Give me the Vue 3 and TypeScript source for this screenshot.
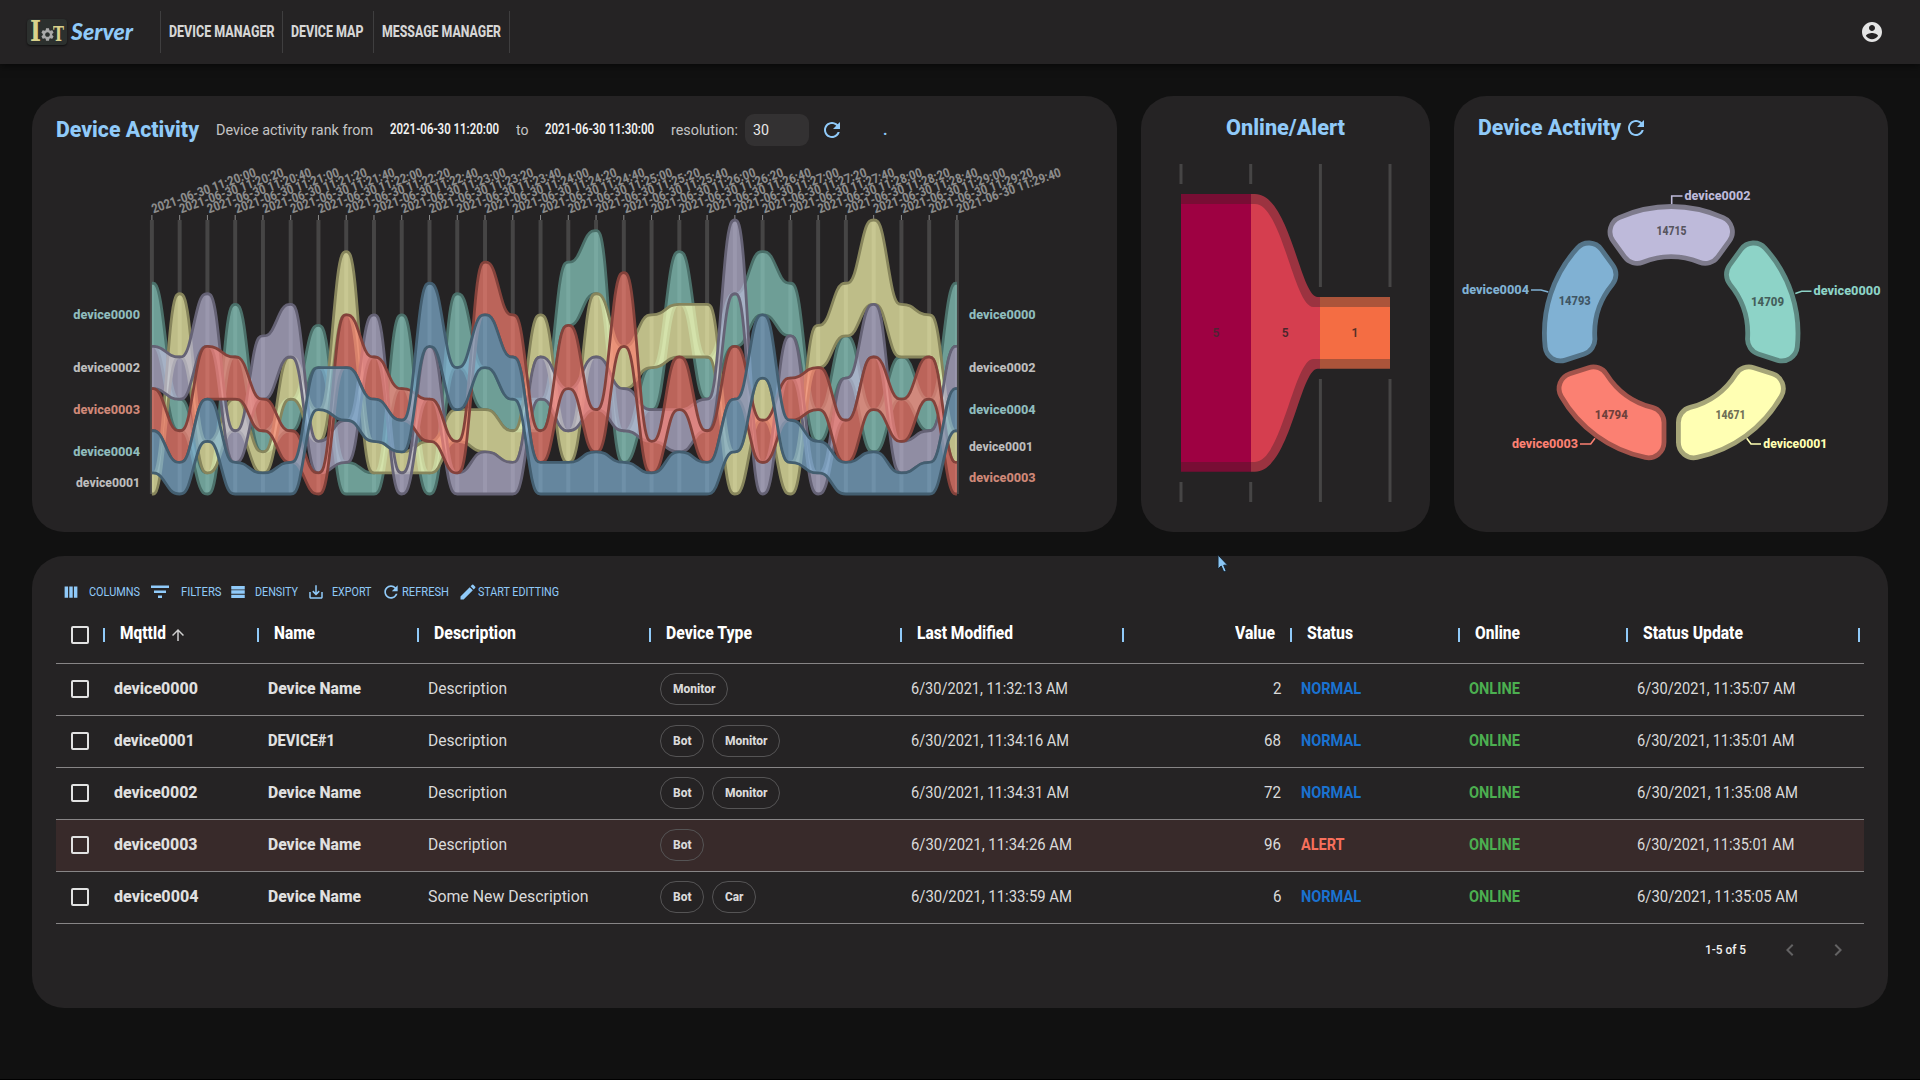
<script setup lang="ts">
type Key = 'T' | 'Y' | 'P' | 'R' | 'B'

interface Layer { key: Key; fill: string; stroke: string }
interface Device {
  id: string; idW: number; name: string; nameW: number; desc: string; descW: number
  types: string[]; modified: string; modW: number; value: number; alert: boolean
  updated: string; updW: number
}

/* Squeezes or stretches a label horizontally so that it takes the given width. */
const vFit = {
  mounted(el: HTMLElement, binding: { value: number }) {
    const natural = el.getBoundingClientRect().width
    if (!natural) return
    el.style.transform = `scaleX(${binding.value / natural})`
    el.style.marginRight = `${binding.value - natural + (parseFloat(getComputedStyle(el).marginRight) || 0)}px`
  },
}

const nav = [
  { label: 'DEVICE MANAGER', w: 105.5, box: 121.5 },
  { label: 'DEVICE MAP', w: 72.5, box: 91 },
  { label: 'MESSAGE MANAGER', w: 119, box: 136 },
]

/* ---------- activity ranking ---------- */
const layers: Layer[] = [
  { key: 'T', fill: '#8dd3c7', stroke: '#4b706a' },
  { key: 'Y', fill: '#ffffb3', stroke: '#87855c' },
  { key: 'P', fill: '#bebada', stroke: '#656275' },
  { key: 'R', fill: '#fb8072', stroke: '#84423b' },
  { key: 'B', fill: '#80b1d3', stroke: '#435e70' },
]

/* every column lists its devices from the top rank down, with their weights */
const columns = [
  'T6P4R4B4Y2', 'Y6P4T3R3B3', 'P5R5B4Y3T2', 'T5R4Y3P3B3', 'P6R3T2Y2B2', 'P5Y4T3R3B3',
  'T4B4Y3P3R2', 'Y6R5B5P4T3', 'P4R4B4Y3T2', 'T7R3B3Y2P2', 'B6P5R4Y3T2', 'T7B4Y3R3P2',
  'R5B5T4Y4P4', 'R4B4T3Y3P3', 'Y4P4T3R3B3', 'T6R6P4Y3B3', 'T6Y6P5R4B4', 'R7Y4P4T3B3',
  'Y5T4P3R3B2', 'T5Y5R5P4B4', 'Y5T4P3R3B3', 'P7T5R5B5Y4', 'T6B6Y4R4P3', 'T5P4R4B4Y3',
  'Y4R4T3B3P2', 'Y5T4P4R4B3', 'Y8P5R5T4B4', 'Y5T4R4P3B2', 'Y4R4T3P3B3', 'T6P4B4Y3R3',
]
const X0 = 151.9
const STEP = 27.76
const BASE = 494
const UNIT = 274 / 26
const colX = (i: number) => X0 + i * STEP

function bounds(col: string, key: Key): [number, number] {
  const parts = (col.match(/[A-Z]\d/g) ?? []).map(p => ({ k: p[0], n: Number(p[1]) }))
  let u = parts.reduce((s, p) => s + p.n, 0)
  for (const p of parts) {
    if (p.k === key) return [BASE - u * UNIT, BASE - (u - p.n) * UNIT]
    u -= p.n
  }
  return [BASE, BASE]
}

/* open cubic B-spline that starts and ends on its first and last points */
function basis(pts: [number, number][], first: string): string {
  const f = (n: number) => n.toFixed(2)
  let d = ''
  let [x0, y0] = pts[0]
  let [x1, y1] = pts[1]
  d += `${first}${f(x0)},${f(y0)}L${f((5 * x0 + x1) / 6)},${f((5 * y0 + y1) / 6)}`
  const push = (x: number, y: number) => {
    d += `C${f((2 * x0 + x1) / 3)},${f((2 * y0 + y1) / 3)} ${f((x0 + 2 * x1) / 3)},${f((y0 + 2 * y1) / 3)} ${f((x0 + 4 * x1 + x) / 6)},${f((y0 + 4 * y1 + y) / 6)}`
    x0 = x1; y0 = y1; x1 = x; y1 = y
  }
  for (const p of pts.slice(2)) push(p[0], p[1])
  push(x1, y1)
  d += `L${f(x1)},${f(y1)}`
  return d
}

function edge(key: Key, side: 0 | 1): [number, number][] {
  const pad = STEP * 0.3
  const out: [number, number][] = []
  columns.forEach((c, i) => {
    const y = bounds(c, key)[side]
    if (i > 0) out.push([colX(i) - pad, y])
    out.push([colX(i), y])
    if (i < columns.length - 1) out.push([colX(i) + pad, y])
  })
  return out
}

const areas = layers.map(l => {
  const top = edge(l.key, 0)
  const bottom = edge(l.key, 1)
  return {
    ...l,
    area: basis(top, 'M') + basis([...bottom].reverse(), 'L') + 'Z',
    top: basis(top, 'M'),
    bottom: basis(bottom, 'M'),
  }
})

const stamps = columns.map((_, i) => {
  const s = i * 20
  const two = (n: number) => String(n).padStart(2, '0')
  return `2021-06-30 11:${two(20 + Math.floor(s / 60))}:${two(s % 60)}`
})

const leftLabels = [
  { t: 'device0000', y: 314.3, c: '#8fbcbd' }, { t: 'device0002', y: 367.3, c: '#bdbdbd' },
  { t: 'device0003', y: 409.3, c: '#cf8878' }, { t: 'device0004', y: 451.3, c: '#8fbcbd' },
  { t: 'device0001', y: 482.3, c: '#bdbdbd' },
]
const rightLabels = [
  { t: 'device0000', y: 314.3, c: '#8fbcbd' }, { t: 'device0002', y: 367.3, c: '#bdbdbd' },
  { t: 'device0004', y: 409.3, c: '#8fbcbd' }, { t: 'device0001', y: 446.3, c: '#bdbdbd' },
  { t: 'device0003', y: 477.3, c: '#cf8878' },
]
const labelW = (t: string) => (t.endsWith('1') ? 64 : 66.7)

/* ---------- ring ---------- */
const CX = 1671.2
const CY = 333.3
function slicePath(mid: number): string {
  const R = 126.8, r = 76.5, rc = 15.5, gap = 7.2
  const rad = (deg: number) => (deg * Math.PI) / 180
  /* point from a boundary ray: `along` it and `off` to its side; dir turns toward the slice */
  const at = (deg: number, along: number, off: number, dir: number) => {
    const a = rad(deg)
    return [CX + Math.sin(a) * along + dir * Math.cos(a) * off, CY - Math.cos(a) * along + dir * Math.sin(a) * off]
  }
  const corner = (deg: number, dir: number, outer: boolean) => {
    const dist = outer ? R - rc : r + rc
    const off = gap + rc
    const along = Math.sqrt(dist * dist - off * off)
    const k = (outer ? R : r) / dist
    return { side: at(deg, along, gap, dir), arc: at(deg, along * k, off * k, dir) }
  }
  const a = mid - 36
  const b = mid + 36
  const oa = corner(a, 1, true), ob = corner(b, -1, true)
  const ia = corner(a, 1, false), ib = corner(b, -1, false)
  const p = (v: number[]) => `${v[0].toFixed(2)},${v[1].toFixed(2)}`
  return `M${p(oa.side)}A${rc},${rc} 0 0 1 ${p(oa.arc)}A${R},${R} 0 0 1 ${p(ob.arc)}A${rc},${rc} 0 0 1 ${p(ob.side)}` +
    `L${p(ib.side)}A${rc},${rc} 0 0 1 ${p(ib.arc)}A${r},${r} 0 0 0 ${p(ia.arc)}A${rc},${rc} 0 0 1 ${p(ia.side)}Z`
}
const slices = [
  { id: 'device0002', v: '14715', mid: 0, fill: '#bebada', stroke: '#7e7b8c', num: '#57555e', w: 66, vw: 30, vx: 1671.5, vy: 235, link: '1671.7,204 1671.7,196 1682.5,196', lx: 1684.5, ly: 200, anchor: 'start' },
  { id: 'device0000', v: '14709', mid: 72, fill: '#8dd3c7', stroke: '#5e8a83', num: '#445e5a', w: 67, vw: 33, vx: 1767.5, vy: 306, link: '1795.3,293.4 1801.7,291.3 1811.5,291.3', lx: 1813.5, ly: 295, anchor: 'start' },
  { id: 'device0001', v: '14671', mid: 144, fill: '#ffffb3', stroke: '#a6a578', num: '#6f6f55', w: 64, vw: 30, vx: 1730.5, vy: 419, link: '1746.7,438.3 1751,444 1761,444', lx: 1763.3, ly: 448, anchor: 'start' },
  { id: 'device0003', v: '14794', mid: 216, fill: '#fb8072', stroke: '#a3534b', num: '#6f403b', w: 66, vw: 33, vx: 1611.3, vy: 419, link: '1595,438.3 1590.7,444 1580,444', lx: 1578, ly: 448, anchor: 'end' },
  { id: 'device0004', v: '14793', mid: 288, fill: '#80b1d3', stroke: '#547489', num: '#3f5563', w: 67, vw: 32, vx: 1574.7, vy: 305, link: '1548.3,292 1541,290 1531,290', lx: 1529, ly: 294, anchor: 'end' },
]

/* ---------- table ---------- */
const heads = [
  { t: 'MqttId', w: 46 }, { t: 'Name', w: 41 }, { t: 'Description', w: 82 },
  { t: 'Device Type', w: 86 }, { t: 'Last Modified', w: 96 }, { t: 'Value', w: 40 },
  { t: 'Status', w: 46 }, { t: 'Online', w: 45 }, { t: 'Status Update', w: 100 },
]
const chipW: Record<string, number> = { Monitor: 42.5, Bot: 18.5, Car: 18.5 }
const devices: Device[] = [
  { id: 'device0000', idW: 84, name: 'Device Name', nameW: 93, desc: 'Description', descW: 79, types: ['Monitor'], modified: '6/30/2021, 11:32:13 AM', modW: 157, value: 2, alert: false, updated: '6/30/2021, 11:35:07 AM', updW: 158.5 },
  { id: 'device0001', idW: 80.5, name: 'DEVICE#1', nameW: 67, desc: 'Description', descW: 79, types: ['Bot', 'Monitor'], modified: '6/30/2021, 11:34:16 AM', modW: 158, value: 68, alert: false, updated: '6/30/2021, 11:35:01 AM', updW: 157.5 },
  { id: 'device0002', idW: 83.5, name: 'Device Name', nameW: 93, desc: 'Description', descW: 79, types: ['Bot', 'Monitor'], modified: '6/30/2021, 11:34:31 AM', modW: 158, value: 72, alert: false, updated: '6/30/2021, 11:35:08 AM', updW: 161 },
  { id: 'device0003', idW: 83.5, name: 'Device Name', nameW: 93, desc: 'Description', descW: 79, types: ['Bot'], modified: '6/30/2021, 11:34:26 AM', modW: 161, value: 96, alert: true, updated: '6/30/2021, 11:35:01 AM', updW: 157.5 },
  { id: 'device0004', idW: 84.5, name: 'Device Name', nameW: 93, desc: 'Some New Description', descW: 160.5, types: ['Bot', 'Car'], modified: '6/30/2021, 11:33:59 AM', modW: 161, value: 6, alert: false, updated: '6/30/2021, 11:35:05 AM', updW: 161 },
]
const REFRESH = 'M17.65 6.35C16.2 4.9 14.21 4 12 4c-4.42 0-7.99 3.58-7.99 8s3.57 8 7.99 8c3.73 0 6.84-2.55 7.73-6h-2.08c-.82 2.33-3.04 4-5.65 4-3.31 0-6-2.69-6-6s2.69-6 6-6c1.66 0 3.14.69 4.22 1.78L13 11h7V4l-2.35 2.35z'
const tools = [
  { t: 'COLUMNS', w: 51, pad: 9.2, end: 8, s: 18, d: 'M3.5 4.5h4.6v15H3.500zM9.700 4.500h4.600v15H9.700zM15.900 4.500h4.600v15h-4.600z' },
  { t: 'FILTERS', w: 40.5, pad: 8.500, end: 7.500, s: 24, d: 'M10 18h4v-2.500h-4v2.500zM3 5.500v2.500h18V5.500H3zm3 7.500h12v-2.500H6v2.500z' },
  { t: 'DENSITY', w: 43, pad: 8.500, end: 8.500, s: 18, d: 'M3 4h18v4.500H3zM3 9.800h18v4.500H3zM3 15.600h18v4.500H3z' },
  { t: 'EXPORT', w: 39.500, pad: 7.500, end: 9.500, s: 18, d: 'M19 12v7H5v-7H3v7c0 1.100.9 2 2 2h14c1.100 0 2-.9 2-2v-7h-2zm-6 .67l2.590-2.580L17 11.500l-5 5-5-5 1.410-1.410L11 12.670V3h2z' },
  { t: 'REFRESH', w: 47, pad: 0.5, end: 9, s: 20, d: REFRESH },
  { t: 'START EDITTING', w: 81, pad: 0, end: 0, s: 20, d: 'M3 17.250V21h3.750L17.810 9.940l-3.750-3.750L3 17.250zM20.710 7.040c.39-.39.39-1.020 0-1.410l-2.340-2.340a.9959.9959 0 0 0-1.410 0l-1.830 1.830 3.750 3.750 1.830-1.830z' },
]
</script>

<template>
  <div class="page">
    <header class="nav">
      <div class="logo">
        <div class="badge">
          <span v-fit="11" class="slab">I</span>
          <svg class="gear" viewBox="2 2 20 20"><path d="M19.14 12.94c.04-.3.06-.61.06-.94 0-.32-.02-.64-.07-.94l2.03-1.58c.18-.14.23-.41.12-.61l-1.92-3.32c-.12-.22-.37-.29-.59-.22l-2.39.96c-.5-.38-1.03-.7-1.62-.94l-.36-2.54c-.04-.24-.24-.41-.48-.41h-3.84c-.24 0-.43.17-.47.41l-.36 2.54c-.59.24-1.13.57-1.62.94l-2.39-.96c-.22-.08-.47 0-.59.22L2.74 8.87c-.12.21-.08.47.12.61l2.03 1.58c-.05.3-.09.63-.09.94s.02.64.07.94l-2.03 1.58c-.18.14-.23.41-.12.61l1.92 3.32c.12.22.37.29.59.22l2.39-.96c.5.38 1.03.7 1.62.94l.36 2.54c.05.24.24.41.48.41h3.84c.24 0 .44-.17.47-.41l.36-2.54c.59-.24 1.13-.56 1.62-.94l2.39.96c.22.08.47 0 .59-.22l1.92-3.32c.12-.22.07-.47-.12-.61l-2.01-1.58zM12 15.600c-1.980 0-3.600-1.620-3.600-3.600s1.620-3.600 3.600-3.600 3.600 1.620 3.600 3.600-1.620 3.600-3.600 3.600z" /></svg>
          <span v-fit="11" class="slab tee">T</span>
        </div>
        <span v-fit="62" class="script">Server</span>
      </div>
      <nav class="links">
        <a v-for="n in nav" :key="n.label" :style="{ width: n.box + 'px' }"><span v-fit="n.w">{{ n.label }}</span></a>
      </nav>
      <svg class="account" viewBox="0 0 24 24"><path d="M12 2C6.48 2 2 6.48 2 12s4.48 10 10 10 10-4.48 10-10S17.52 2 12 2zm0 3c1.66 0 3 1.34 3 3s-1.34 3-3 3-3-1.34-3-3 1.34-3 3-3zm0 14.2c-2.5 0-4.71-1.28-6-3.22.03-1.99 4-3.08 6-3.08 1.99 0 5.97 1.09 6 3.08-1.29 1.94-3.5 3.22-6 3.22z" /></svg>
    </header>

    <main class="content">
      <div class="cards">
        <section class="card">
          <div class="head">
            <h2 v-fit="143" class="title">Device Activity</h2>
            <span v-fit="157" class="soft first">Device activity rank from</span>
            <span v-fit="109" class="stamp">2021-06-30 11:20:00</span>
            <span v-fit="12.5" class="soft">to</span>
            <span v-fit="109" class="stamp">2021-06-30 11:30:00</span>
            <span v-fit="67" class="soft">resolution:</span>
            <div class="input"><span v-fit="16">30</span></div>
            <svg class="refresh" viewBox="0 0 24 24"><path :d="REFRESH" /></svg>
            <span class="dot">.</span>
          </div>
          <svg class="chart" width="1085" height="368" viewBox="32 164 1085 368">
            <g stroke="#464545" stroke-width="4">
              <line v-for="(_, i) in columns" :key="i" :x1="colX(i)" :x2="colX(i)" y1="220" y2="494" />
            </g>
            <g stroke="#8a8a8a" stroke-width="1">
              <line v-for="(_, i) in columns" :key="i" :x1="colX(i)" :x2="colX(i)" y1="215" y2="220" />
            </g>
            <g v-for="a in areas" :key="a.key">
              <path :d="a.area" :fill="a.fill" fill-opacity="0.7" />
              <path :d="a.top" fill="none" :stroke="a.stroke" stroke-width="2.8" />
              <path :d="a.bottom" fill="none" :stroke="a.stroke" stroke-width="2.8" />
            </g>
            <g class="stamps">
              <text
                v-for="(s, i) in stamps" :key="s" textLength="110" lengthAdjust="spacingAndGlyphs"
                :transform="`translate(${colX(i) + 1.6} 213.6) rotate(-20)`"
              >{{ s }}</text>
            </g>
            <g class="label">
              <text
                v-for="l in leftLabels" :key="l.t" x="140" :y="l.y + 4.6" :fill="l.c" text-anchor="end"
                :textLength="labelW(l.t)" lengthAdjust="spacingAndGlyphs"
              >{{ l.t }}</text>
              <text
                v-for="l in rightLabels" :key="l.t" x="969" :y="l.y + 4.6" :fill="l.c"
                :textLength="labelW(l.t)" lengthAdjust="spacingAndGlyphs"
              >{{ l.t }}</text>
            </g>
          </svg>
        </section>

        <section class="card">
          <div class="head centered"><h2 v-fit="119" class="title">Online/Alert</h2></div>
          <svg class="chart" width="289" height="368" viewBox="1141 164 289 368">
            <g stroke="#464545" stroke-width="3">
              <path d="M1181 164v20M1181 482v20M1250.700 164v20M1250.700 482v20M1320.400 164v123M1320.400 379v123M1390 164v123M1390 379v123" />
            </g>
            <path d="M1181 194h70v277.700h-70z" fill="#780d34" />
            <path d="M1181 204h70v258h-70z" fill="#9e0142" />
            <path d="M1251 194H1255C1290 194 1300 297 1317.700 297H1320.500V368.700H1317.700C1300 368.700 1290 471.700 1255 471.700H1251Z" fill="#9b3340" />
            <path d="M1251 204H1255C1281.700 204 1294 307 1313.300 307H1320.500V359H1313.300C1294 359 1281.700 462 1255 462H1251Z" fill="#d53e4f" />
            <path d="M1320 297h70v71.700h-70z" fill="#ab543a" />
            <path d="M1320 307h70v52h-70z" fill="#f46d43" />
            <g class="funnel">
              <text x="1216" y="337" fill="#4f2433">5</text>
              <text x="1285.3" y="337" fill="#4a262c">5</text>
              <text x="1355" y="337" fill="#523028">1</text>
            </g>
          </svg>
        </section>

        <section class="card">
          <div class="head right">
            <h2 v-fit="143" class="title">Device Activity</h2>
            <svg class="refresh" viewBox="0 0 24 24"><path :d="REFRESH" /></svg>
          </div>
          <svg class="chart" width="434" height="368" viewBox="1454 164 434 368">
            <g v-for="s in slices" :key="s.id" class="label">
              <path :d="slicePath(s.mid)" :fill="s.fill" :stroke="s.stroke" stroke-width="4.8" />
              <text
                :x="s.vx" :y="s.vy" :fill="s.num" text-anchor="middle" :textLength="s.vw"
                lengthAdjust="spacingAndGlyphs"
              >{{ s.v }}</text>
              <polyline :points="s.link" fill="none" :stroke="s.fill" stroke-width="1.6" />
              <text
                :x="s.lx" :y="s.ly" :fill="s.fill" :text-anchor="s.anchor" :textLength="s.w"
                lengthAdjust="spacingAndGlyphs"
              >{{ s.id }}</text>
            </g>
          </svg>
        </section>
      </div>

      <section class="card table">
        <div class="toolbar">
          <div v-for="t in tools" :key="t.t" class="tool" :style="{ marginRight: t.end + 'px' }">
            <svg :width="t.s" :height="t.s" viewBox="0 0 24 24" :style="{ marginRight: t.pad + 'px' }"><path :d="t.d" /></svg>
            <span v-fit="t.w">{{ t.t }}</span>
          </div>
        </div>
        <div class="row header">
          <div class="check"><i /></div>
          <div v-for="h in heads" :key="h.t" class="th" :class="{ num: h.t === 'Value' }">
            <span v-fit="h.w">{{ h.t }}</span>
            <svg v-if="h.t === 'MqttId'" class="arrow" viewBox="0 0 24 24"><path d="M4 12l1.41 1.41L11 7.83V20h2V7.83l5.58 5.59L20 12l-8-8-8 8z" /></svg>
          </div>
        </div>
        <div v-for="d in devices" :key="d.id" class="row" :class="{ alert: d.alert }">
          <div class="check"><i /></div>
          <div class="td strong"><span v-fit="d.idW">{{ d.id }}</span></div>
          <div class="td strong"><span v-fit="d.nameW">{{ d.name }}</span></div>
          <div class="td"><span v-fit="d.descW">{{ d.desc }}</span></div>
          <div class="td chips">
            <div v-for="c in d.types" :key="c" class="chip"><span v-fit="chipW[c]">{{ c }}</span></div>
          </div>
          <div class="td"><span v-fit="d.modW">{{ d.modified }}</span></div>
          <div class="td num"><span v-fit="d.value > 9 ? 17 : 8.5">{{ d.value }}</span></div>
          <div class="td state" :class="d.alert ? 'bad' : 'normal'"><span v-fit="d.alert ? 43.5 : 60">{{ d.alert ? 'ALERT' : 'NORMAL' }}</span></div>
          <div class="td state online"><span v-fit="51">ONLINE</span></div>
          <div class="td"><span v-fit="d.updW">{{ d.updated }}</span></div>
        </div>
        <div class="footer">
          <span v-fit="41">1-5 of 5</span>
          <svg viewBox="0 0 24 24"><path d="M15.41 7.41L14 6l-6 6 6 6 1.41-1.41L10.83 12z" /></svg>
          <svg viewBox="0 0 24 24"><path d="M10 6L8.59 7.41 13.17 12l-4.58 4.59L10 18l6-6z" /></svg>
        </div>
      </section>
    </main>

    <svg class="cursor" width="16" height="22" viewBox="0 0 16 22">
      <path d="M2 1v14l3.200-3 2.600 6 2.400-1-2.500-5.800h4z" fill="#8ac6f5" stroke="#16212b" stroke-width="1" />
    </svg>
  </div>
</template>

<style>
body {
  margin: 0;
  background: #111;
}
</style>

<style scoped>
.page {
  position: relative;
  box-sizing: border-box;
  width: 1920px;
  height: 1080px;
  overflow: hidden;
  background: #111;
  border-bottom: 1px solid #000;
  color: #dcdcdc;
  font-family: Roboto, 'Liberation Sans', sans-serif;
}
span,
h2 {
  display: block;
  flex: none;
  margin: 0;
  white-space: nowrap;
  transform-origin: 0 50%;
}
svg {
  display: block;
  flex: none;
  overflow: visible;
}
.nav {
  display: flex;
  align-items: center;
  height: 64px;
  background: #252324;
  box-shadow: 0 2px 8px rgba(0, 0, 0, 0.6);
}
.logo {
  display: flex;
  align-items: center;
  width: 133px;
  padding-left: 27px;
}
.badge {
  display: flex;
  align-items: center;
  box-sizing: border-box;
  width: 40px;
  height: 26px;
  padding-left: 3px;
  border-radius: 4px;
  background: #2c302e;
  box-shadow: 0 1px 2px rgba(0, 0, 0, 0.6);
}
.slab {
  color: #d9d18c;
  font: bold 27px/26px 'DejaVu Serif', serif;
}
.tee {
  padding-top: 5px;
  font-size: 20px;
  line-height: 21px;
}
.gear {
  width: 13px;
  height: 13px;
  margin: 5px -0.5px 0 -0.5px;
  fill: #a9a9a9;
}
.script {
  margin-left: 4px;
  color: #90caf9;
  font: italic 900 22px/26px Lato, sans-serif;
}
.links {
  display: flex;
  border-left: 1px solid #3f3e3f;
}
.links a {
  display: flex;
  align-items: center;
  box-sizing: border-box;
  height: 42px;
  padding: 0 0 2px 8px;
  border-right: 1px solid #3f3e3f;
  color: #d6d6d6;
  font-size: 17px;
  font-weight: 800;
}
.account {
  width: 24px;
  height: 24px;
  margin-left: auto;
  margin-right: 36px;
  fill: #e4e4e4;
}
.content {
  display: flex;
  flex-direction: column;
  gap: 24px;
  padding: 32px;
}
.cards {
  display: grid;
  grid-template-columns: 1085px 289px 434px;
  gap: 24px;
  height: 436px;
}
.card {
  border-radius: 32px;
  background: #252324;
}
.head {
  display: flex;
  align-items: center;
  box-sizing: border-box;
  height: 68px;
  padding: 0 0 1px 23.5px;
}
.title {
  color: #90caf9;
  font-size: 22px;
  font-weight: 800;
  line-height: 28px;
}
.head.right,
.head.centered {
  height: 64px;
  margin-bottom: 4px;
}
.head.centered {
  justify-content: center;
  padding-left: 0;
}
.head .soft {
  margin-left: 17px;
  color: #c4c4c4;
  font-size: 15.5px;
}
.head .soft.first {
  margin-left: 17px;
}
.stamp {
  margin-left: 17px;
  color: #f2f2f2;
  font-size: 14.5px;
  font-weight: 600;
}
.input {
  display: flex;
  align-items: center;
  box-sizing: border-box;
  width: 64px;
  height: 32px;
  margin-left: 7px;
  padding-left: 8px;
  border-radius: 9px;
  background: #333132;
  color: #e8e8e8;
  font-size: 15.5px;
}
.refresh {
  width: 24px;
  height: 24px;
  margin-left: 11px;
  fill: #90caf9;
}
.right .refresh {
  margin-left: 3px;
}
.dot {
  margin-left: 39px;
  color: #90caf9;
  font-size: 16px;
  font-weight: 600;
}
.stamps {
  fill: #8b8b8b;
  font-size: 13px;
  font-weight: 800;
}
.label {
  font-size: 13px;
  font-weight: 800;
}
.funnel {
  font-size: 12px;
  font-weight: 600;
  text-anchor: middle;
}
.table {
  box-sizing: border-box;
  height: 452px;
  padding: 20px 24px 0;
}
.toolbar {
  display: flex;
  align-items: center;
  box-sizing: border-box;
  height: 32px;
  padding: 0 0 1px 6px;
}
.tool {
  display: flex;
  align-items: center;
  color: #90caf9;
  font-size: 13px;
}
.tool svg {
  fill: #90caf9;
}
.row {
  display: grid;
  grid-template-columns: 48px 154px 160px 232px 251px 222px 168px 168px 168px 237px;
  box-sizing: border-box;
  height: 52px;
  border-bottom: 1px solid #878586;
}
.row.header {
  height: 56px;
}
.row.alert {
  background: #382a2a;
}
.check {
  display: flex;
  align-items: center;
  padding: 0 0 2px 15px;
}
.header .check {
  padding-bottom: 1px;
}
.check i {
  box-sizing: border-box;
  width: 18px;
  height: 18px;
  border: 2px solid #e2e2e2;
  border-radius: 2px;
}
.th {
  display: flex;
  align-items: center;
  box-sizing: border-box;
  padding: 0 16px 5px;
  color: #fff;
  font-size: 18.5px;
  font-weight: 800;
}
.th::before {
  content: '';
  flex: none;
  width: 2px;
  height: 14px;
  margin: 4px 15px 0 -17px;
  background: #90caf9;
}
.th.num::before {
  margin-right: auto;
}
.th:last-child::after {
  content: '';
  flex: none;
  width: 2px;
  height: 14px;
  margin: 4px -12px 0 auto;
  background: #90caf9;
}
.arrow {
  width: 18px;
  height: 18px;
  margin: 4px 0 0 3px;
  fill: #d0d0d0;
}
.td {
  display: flex;
  align-items: center;
  padding: 0 10px 2px;
  color: #dadada;
  font-size: 16px;
}
.strong {
  color: #e0e0e0;
  font-weight: 800;
}
.num {
  justify-content: flex-end;
}
.state {
  font-weight: 700;
}
.normal {
  color: #1a72d0;
}
.bad {
  color: #f7705c;
}
.online {
  color: #4caf50;
}
.chips {
  gap: 8px;
}
.chip {
  display: flex;
  align-items: center;
  box-sizing: border-box;
  height: 32px;
  padding: 0 11.75px;
  border: 1px solid #555455;
  border-radius: 16px;
  font-size: 13px;
  font-weight: 800;
}
.footer {
  display: flex;
  align-items: center;
  justify-content: flex-end;
  box-sizing: border-box;
  height: 52px;
  padding: 0 14px 1px 0;
  color: #f0f0f0;
  font-size: 13px;
  font-weight: 500;
}
.footer svg {
  width: 24px;
  height: 24px;
  margin-left: 24px;
  fill: #636263;
}
.footer span + svg {
  margin-left: 32px;
}
.cursor {
  position: absolute;
  left: 1216px;
  top: 554px;
}
</style>
